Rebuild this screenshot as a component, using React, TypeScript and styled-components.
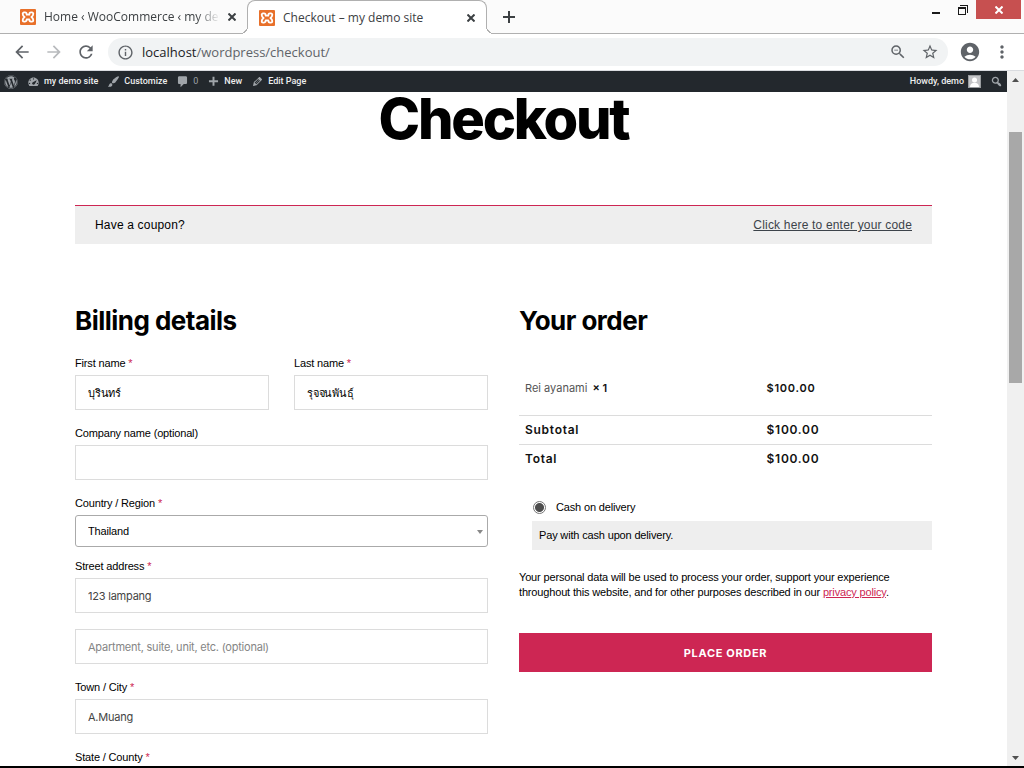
import React from "react";
import styled, { createGlobalStyle } from "styled-components";
import {
  MdAccountCircle,
  MdArrowBack,
  MdArrowForward,
  MdMoreVert,
  MdOutlineInfo,
  MdRefresh,
  MdStarBorder,
  MdZoomOut,
} from "react-icons/md";
import { FaWordpress } from "react-icons/fa";

const uiFont = `"Segoe UI", "Open Sans", "Noto Sans", sans-serif`;
const bodyFont = `Arial, "Liberation Sans", sans-serif`;
const interFont = `Inter, "Liberation Sans", sans-serif`;
const accent = "#cd2653";
const stripColor = "#fbfbfb";
const tabLine = "#b0b0b0";

const GlobalStyle = createGlobalStyle`
  *, *::before, *::after { box-sizing: border-box; }
  body { margin: 0; background: #fff; color: #000; font-family: ${bodyFont}; }
  button, input, select { margin: 0; font: inherit; letter-spacing: inherit; }
  h1, h2, p { margin: 0; }
  svg { display: block; flex: none; }
`;

const Window = styled.div`
  display: flex;
  flex-direction: column;
  height: 100vh;
  overflow: hidden;
  border-bottom: 2px solid #000;
`;

/* Browser chrome */

const TabStrip = styled.div`
  display: flex;
  flex: none;
  height: 34px;
  background: linear-gradient(${tabLine}, ${tabLine}) bottom / 100% 1px no-repeat ${stripColor};
`;

const Tab = styled.div<{ $active?: boolean }>`
  position: relative;
  display: flex;
  align-items: center;
  width: ${(p) => (p.$active ? 240 : 247)}px;
  padding: ${(p) => (p.$active ? "0 11px 0 11px" : "0 11px 0 20px")};
  color: #3c4043;
  font: 12px/16px ${uiFont};
  ${(p) =>
    p.$active &&
    `
    background: #fff;
    border: 1px solid ${tabLine};
    border-bottom: 0;
    border-radius: 8px 8px 0 0;
    &::before, &::after {
      content: "";
      position: absolute;
      bottom: 0;
      width: 8px;
      height: 8px;
    }
    &::before {
      left: -8px;
      background: radial-gradient(circle at 0 0, ${stripColor} 7px, ${tabLine} 7px, ${tabLine} 8px, #fff 8px);
    }
    &::after {
      right: -8px;
      background: radial-gradient(circle at 100% 0, ${stripColor} 7px, ${tabLine} 7px, ${tabLine} 8px, #fff 8px);
    }
  `}
`;

const TabTitle = styled.span<{ $fade?: boolean }>`
  flex: 1;
  min-width: 0;
  margin: 0 8px;
  overflow: hidden;
  white-space: nowrap;
  ${(p) => p.$fade && "mask-image: linear-gradient(to left, transparent, #000 24px);"}
`;

const GlyphButton = styled.button`
  display: flex;
  flex: none;
  align-items: center;
  justify-content: center;
  padding: 0;
  border: 0;
  background: none;
  color: #3c4043;
`;

const NewTabButton = styled(GlyphButton)`
  width: 28px;
  margin-left: 8px;
`;

const WindowControls = styled.div`
  display: flex;
  align-items: flex-start;
  margin-left: auto;
  padding-right: 3px;
`;

const WindowButton = styled(GlyphButton)<{ $close?: boolean }>`
  width: ${(p) => (p.$close ? 45 : 27)}px;
  height: 19px;
  background: ${(p) => (p.$close ? "#c75050" : "none")};
  color: ${(p) => (p.$close ? "#fff" : "#1a1a1a")};
`;

const Toolbar = styled.div`
  display: flex;
  flex: none;
  align-items: center;
  gap: 12px;
  height: 37px;
  padding: 0 12px;
  border-bottom: 1px solid #dadce0;
`;

const ToolButton = styled(GlyphButton)<{ $dim?: boolean }>`
  width: 20px;
  height: 20px;
  color: ${(p) => (p.$dim ? "#b8babd" : "#5f6368")};
`;

const AddressBar = styled.div`
  display: flex;
  flex: 1;
  align-items: center;
  gap: 12px;
  height: 28px;
  padding: 0 8px 0 9px;
  border-radius: 14px;
  background: #f1f3f4;
  color: #5f6368;
`;

const Address = styled.div`
  flex: 1;
  margin-left: -4px;
  font: 13px/20px ${uiFont};
  span { color: #202124; }
`;

/* Page */

const Viewport = styled.div`
  display: flex;
  flex: 1;
  min-height: 0;
`;

const Page = styled.div`
  flex: 1;
  min-width: 0;
  overflow: hidden;
`;

const AdminBar = styled.nav`
  display: flex;
  align-items: center;
  gap: 9px;
  height: 21px;
  padding: 0 4px;
  background: #23282d;
  font: 9px/21px Roboto, ${uiFont};
`;

const AdminLink = styled.a<{ $end?: boolean; $muted?: boolean }>`
  display: flex;
  align-items: center;
  gap: 4px;
  margin-left: ${(p) => (p.$end ? "auto" : 0)};
  color: ${(p) => (p.$muted ? "#9ca1a6" : "#eee")};
  font-weight: ${(p) => (p.$muted ? 400 : 500)};
  text-decoration: none;
  white-space: nowrap;
  svg { color: #a0a5aa; }
`;

const Title = styled.h1`
  padding: 0 0 50px;
  margin-top: -9px;
  font: 800 56px/72px ${interFont};
  letter-spacing: -0.04em;
  text-align: center;
`;

const Content = styled.main`
  padding: 0 75px;
`;

const Coupon = styled.div`
  display: flex;
  justify-content: space-between;
  align-items: center;
  height: 39px;
  padding: 0 20px;
  border-top: 1px solid ${accent};
  background: #eee;
  font-size: 12px;
  line-height: 18px;
  letter-spacing: 0.015em;
  a { color: #3c434a; }
`;

const Columns = styled.div`
  display: grid;
  grid-template-columns: 1fr 1fr;
  gap: 31px;
  margin-top: 61px;
  letter-spacing: -0.01em;
`;

const Heading = styled.h2`
  font: 700 26px/32px ${interFont};
  letter-spacing: -0.02em;
`;

const Form = styled.form`
  display: flex;
  flex-direction: column;
  gap: 16px;
  margin-top: 19px;
`;

const NameRow = styled.div`
  display: grid;
  grid-template-columns: 1fr 1fr;
  gap: 25px;
`;

const Field = styled.div<{ $tight?: boolean }>`
  display: flex;
  flex-direction: column;
  gap: 4px;
  min-width: 0;
  margin-bottom: ${(p) => (p.$tight ? -4 : 0)}px;
`;

const Label = styled.label`
  font-size: 11px;
  line-height: 15px;
  span { color: ${accent}; }
`;

const TextInput = styled.input<{ $dark?: boolean }>`
  width: 100%;
  height: 35px;
  padding: 0 12px;
  border: 1px solid #dcdcdc;
  border-radius: 0;
  outline: 0;
  background: #fff;
  color: ${(p) => (p.$dark ? "#000" : "#444")};
  font: 11px/16px ${interFont};
  letter-spacing: -0.02em;
  &::placeholder { color: #858585; opacity: 1; }
`;

const SelectBox = styled.div`
  position: relative;
  &::after {
    content: "";
    position: absolute;
    top: 15px;
    right: 5px;
    border: solid transparent;
    border-width: 4px 3px 0;
    border-top-color: #888;
  }
`;

const Select = styled.select`
  display: block;
  width: 100%;
  height: 32px;
  padding: 0 12px;
  appearance: none;
  border: 1px solid #aaa;
  border-radius: 3px;
  background: #fff;
  color: #000;
  font-size: 11px;
`;

const OrderTable = styled.table`
  width: 100%;
  margin-top: 24px;
  border-collapse: collapse;
  table-layout: fixed;
  color: #111;
  font: 12px/16px ${interFont};
  letter-spacing: 0.06em;
  th, td { padding: 0 6px; text-align: left; font-weight: 600; }
  th:first-child, td:first-child { width: 58.5%; }
`;

const ItemRow = styled.tr`
  height: 54px;
  font-size: 11px;
`;

const ItemName = styled.span`
  margin-right: 5px;
  color: #555;
  font-weight: 400;
`;

const ItemCell = styled.td`
  letter-spacing: 0;
`;

const TotalRow = styled.tr`
  height: 29px;
  border-top: 1px solid #dcdcdc;
`;

const Payment = styled.div`
  margin: 23px 0 0 13px;
  font-size: 11px;
  line-height: 15px;
`;

const PaymentChoice = styled.label`
  display: flex;
  align-items: center;
  gap: 10px;
  height: 22px;
  padding-left: 1px;
`;

const Radio = styled.input`
  width: 13px;
  height: 13px;
  appearance: none;
  border: 1px solid #767676;
  border-radius: 50%;
  background: radial-gradient(circle, #4d4d4d 4px, #fff 5px);
`;

const PaymentNote = styled.p`
  margin-top: 3px;
  padding: 7px;
  background: #eee;
`;

const Privacy = styled.p`
  margin-top: 20px;
  font-size: 11px;
  line-height: 15px;
  a { color: ${accent}; }
`;

const PlaceOrder = styled.button`
  width: 100%;
  height: 39px;
  margin-top: 33px;
  border: 0;
  background: ${accent};
  color: #fff;
  font: 700 11px/16px ${interFont};
  letter-spacing: 0.06em;
  text-transform: uppercase;
`;

const ScrollBar = styled.div`
  display: flex;
  flex-direction: column;
  width: 17px;
  background: #f0f0f0;
`;

const ScrollArrow = styled(GlyphButton)`
  height: 17px;
  color: #505050;
`;

const ScrollTrack = styled.div`
  flex: 1;
  padding: 44px 2px 0;
`;

const ScrollThumb = styled.div`
  height: 251px;
  background: #a8a8a8;
`;

/* Icons */

const adminIcons = {
  dashboard:
    "M3.76 17h12.48C17.34 15.63 18 13.9 18 12c0-4.41-3.58-8-8-8s-8 3.59-8 8c0 1.9.66 3.63 1.76 5zM9 6c0-.55.45-1 1-1s1 .45 1 1-.45 1-1 1-1-.45-1-1zM4 8c0-.55.45-1 1-1s1 .45 1 1-.45 1-1 1-1-.45-1-1zm4.52 3.4c.84-.83 6.51-3.5 6.51-3.5s-2.66 5.68-3.49 6.51c-.84.84-2.18.84-3.02 0-.83-.83-.83-2.18 0-3.01zM3 13c0-.55.45-1 1-1s1 .45 1 1-.45 1-1 1-1-.45-1-1zm12 0c0-.55.45-1 1-1s1 .45 1 1-.45 1-1 1-1-.45-1-1z",
  brush:
    "M18.33 3.57s.27-.8-.31-1.36c-.53-.52-1.22-.24-1.22-.24-.61.3-5.76 3.47-7.67 5.57-.86.96-2.06 3.79-1.09 4.82.92.98 3.96-.17 4.79-1 2.06-2.06 5.21-7.17 5.5-7.79zM1.4 17.65c2.37-1.56 1.46-3.41 3.23-4.64.93-.65 2.22-.62 3.08.29.63.67.8 2.57-.16 3.46-1.57 1.45-4 1.55-6.15.89z",
  comment: "M5 2h10c1.1 0 2 .9 2 2v8c0 1.1-.9 2-2 2h-3l-5 5v-5H5c-1.1 0-2-.9-2-2V4c0-1.1.9-2 2-2z",
  plus: "M17 8v3h-5.500v5.500h-3V11H3V8h5.500V2.500h3V8z",
  pencil:
    "M13.89 3.39l2.71 2.72c.46.46.42 1.24.03 1.64l-8.01 8.02-5.56 1.16 1.16-5.58s7.6-7.63 7.99-8.03c.39-.39 1.22-.39 1.68.07zm-2.73 2.79l-5.59 5.61 1.11 1.11 5.54-5.65zm-2.97 8.23l5.58-5.6-1.07-1.08-5.59 5.6z",
  search:
    "M12.14 4.18c1.87 1.87 2.11 4.75.72 6.89.12.1.22.21.36.31.2.16.47.36.81.59.34.24.56.39.66.47.42.31.73.57.94.78.32.32.6.65.84 1 .25.35.44.69.59 1.04.14.35.21.68.18 1-.02.32-.14.59-.36.81s-.49.34-.81.36c-.31.02-.65-.04-.99-.19-.35-.14-.7-.34-1.04-.59-.35-.24-.68-.52-1-.84-.21-.21-.47-.52-.77-.93-.1-.13-.25-.35-.47-.66-.22-.32-.4-.57-.56-.78-.16-.2-.29-.35-.44-.5-2.07 1.09-4.69.76-6.44-.98-2.14-2.15-2.14-5.64 0-7.78 2.15-2.15 5.63-2.15 7.78 0zm-1.41 6.36c1.36-1.37 1.36-3.58 0-4.95-1.37-1.37-3.59-1.37-4.95 0-1.37 1.37-1.37 3.58 0 4.95 1.36 1.37 3.58 1.37 4.95 0z",
};

const AdminIcon = ({ name }: { name: keyof typeof adminIcons }) => (
  <svg width="13" height="13" viewBox="0 0 20 20" fill="currentColor" fillRule="evenodd" aria-hidden="true">
    <path d={adminIcons[name]} />
  </svg>
);

const XamppLogo = () => (
  <svg width="16" height="16" viewBox="0 0 16 16" aria-hidden="true">
    <rect width="16" height="16" rx="1" fill="#e8702a" />
    <path
      d="M5 3.400H4a1.300 1.300 0 0 0-1.300 1.300c0 1.400.7 2.500 1.900 3.300-1.200.8-1.900 1.900-1.900 3.300A1.300 1.300 0 0 0 4 12.600h1c1.500 0 1.700-1.100 1.700-2.300h2.600c0 1.200.2 2.300 1.700 2.300h1a1.300 1.300 0 0 0 1.300-1.300c0-1.400-.7-2.500-1.900-3.300 1.200-.8 1.900-1.900 1.900-3.300A1.300 1.300 0 0 0 12 3.400h-1c-1.500 0-1.700 1.100-1.700 2.300H6.700c0-1.200-.2-2.300-1.700-2.300z"
      fill="none"
      stroke="#fff"
      strokeWidth="1.800"
      strokeLinejoin="round"
    />
  </svg>
);

const CrossIcon = () => (
  <svg width="8" height="8" viewBox="0 0 8 8" stroke="currentColor" strokeWidth="2" aria-hidden="true">
    <path d="M.5.5l7 7M7.500.5l-7 7" />
  </svg>
);

const Avatar = () => (
  <svg width="13" height="13" viewBox="0 0 13 13" aria-hidden="true">
    <rect x=".5" y=".5" width="12" height="12" fill="#c3c4c7" stroke="#9a9da0" />
    <circle cx="6.500" cy="5" r="2.500" fill="#fff" />
    <path d="M2 12c0-3 2-4.200 4.500-4.200S11 9 11 12z" fill="#fff" />
  </svg>
);

const TextField = ({
  id,
  label,
  required,
  dark,
  ...rest
}: { id: string; label?: string; required?: boolean; dark?: boolean } & React.InputHTMLAttributes<HTMLInputElement>) => (
  <Field>
    {label && (
      <Label htmlFor={id}>
        {label} {required && <span>*</span>}
      </Label>
    )}
    <TextInput id={id} type="text" $dark={dark} {...rest} />
  </Field>
);

export default function App() {
  return (
    <Window>
      <GlobalStyle />
      <TabStrip>
        <Tab>
          <XamppLogo />
          <TabTitle $fade>Home ‹ WooCommerce ‹ my demo site</TabTitle>
          <GlyphButton aria-label="Close Home tab">
            <CrossIcon />
          </GlyphButton>
        </Tab>
        <Tab $active>
          <XamppLogo />
          <TabTitle>Checkout – my demo site</TabTitle>
          <GlyphButton aria-label="Close Checkout tab">
            <CrossIcon />
          </GlyphButton>
        </Tab>
        <NewTabButton aria-label="New tab">
          <svg width="12" height="12" viewBox="0 0 12 12" stroke="currentColor" strokeWidth="2" aria-hidden="true">
            <path d="M6 0v12M0 6h12" />
          </svg>
        </NewTabButton>
        <WindowControls>
          <WindowButton aria-label="Minimize">
            <svg width="8" height="10" viewBox="0 0 8 10" fill="currentColor" aria-hidden="true">
              <path d="M0 7h8v2H0z" />
            </svg>
          </WindowButton>
          <WindowButton aria-label="Restore">
            <svg width="10" height="10" viewBox="0 0 10 10" fill="currentColor" fillRule="evenodd" aria-hidden="true">
              <path d="M2 0h8v8H9V1H2zM0 2h8v8H0zm1 2v5h6V4z" />
            </svg>
          </WindowButton>
          <WindowButton $close aria-label="Close window">
            <CrossIcon />
          </WindowButton>
        </WindowControls>
      </TabStrip>

      <Toolbar>
        <ToolButton aria-label="Back">
          <MdArrowBack size={20} />
        </ToolButton>
        <ToolButton $dim aria-label="Forward">
          <MdArrowForward size={20} />
        </ToolButton>
        <ToolButton aria-label="Reload">
          <MdRefresh size={20} />
        </ToolButton>
        <AddressBar>
          <MdOutlineInfo size={17} />
          <Address>
            <span>localhost</span>/wordpress/checkout/
          </Address>
          <ToolButton aria-label="Zoom">
            <MdZoomOut size={18} />
          </ToolButton>
          <ToolButton aria-label="Bookmark this page">
            <MdStarBorder size={18} />
          </ToolButton>
        </AddressBar>
        <ToolButton aria-label="Profile">
          <MdAccountCircle size={22} />
        </ToolButton>
        <ToolButton aria-label="Menu">
          <MdMoreVert size={20} />
        </ToolButton>
      </Toolbar>

      <Viewport>
        <Page>
          <AdminBar>
            <AdminLink href="#" aria-label="WordPress">
              <FaWordpress size={14} />
            </AdminLink>
            <AdminLink href="#">
              <AdminIcon name="dashboard" />
              my demo site
            </AdminLink>
            <AdminLink href="#">
              <AdminIcon name="brush" />
              Customize
            </AdminLink>
            <AdminLink href="#" $muted>
              <AdminIcon name="comment" />0
            </AdminLink>
            <AdminLink href="#">
              <AdminIcon name="plus" />
              New
            </AdminLink>
            <AdminLink href="#">
              <AdminIcon name="pencil" />
              Edit Page
            </AdminLink>
            <AdminLink href="#" $end>
              Howdy, demo
              <Avatar />
            </AdminLink>
            <AdminLink href="#" aria-label="Search">
              <AdminIcon name="search" />
            </AdminLink>
          </AdminBar>

          <Content>
            <Title>Checkout</Title>
            <Coupon>
              Have a coupon?
              <a href="#">Click here to enter your code</a>
            </Coupon>
            <Columns>
              <section>
                <Heading>Billing details</Heading>
                <Form>
                  <NameRow>
                    <TextField id="first-name" label="First name" required dark defaultValue="บุรินทร์" />
                    <TextField id="last-name" label="Last name" required dark defaultValue="รุจจนพันธุ์" />
                  </NameRow>
                  <TextField id="company" label="Company name (optional)" />
                  <Field $tight>
                    <Label htmlFor="country">
                      Country / Region <span>*</span>
                    </Label>
                    <SelectBox>
                      <Select id="country" defaultValue="TH">
                        <option value="TH">Thailand</option>
                      </Select>
                    </SelectBox>
                  </Field>
                  <TextField id="street" label="Street address" required defaultValue="123 lampang" />
                  <TextField
                    id="apartment"
                    aria-label="Apartment"
                    placeholder="Apartment, suite, unit, etc. (optional)"
                  />
                  <TextField id="city" label="Town / City" required defaultValue="A.Muang" />
                  <TextField id="state" label="State / County" required />
                </Form>
              </section>

              <section>
                <Heading>Your order</Heading>
                <OrderTable>
                  <tbody>
                    <ItemRow>
                      <ItemCell>
                        <ItemName>Rei ayanami</ItemName>× 1
                      </ItemCell>
                      <td>$100.00</td>
                    </ItemRow>
                    <TotalRow>
                      <th scope="row">Subtotal</th>
                      <td>$100.00</td>
                    </TotalRow>
                    <TotalRow>
                      <th scope="row">Total</th>
                      <td>$100.00</td>
                    </TotalRow>
                  </tbody>
                </OrderTable>
                <Payment>
                  <PaymentChoice>
                    <Radio type="radio" name="payment" defaultChecked />
                    Cash on delivery
                  </PaymentChoice>
                  <PaymentNote>Pay with cash upon delivery.</PaymentNote>
                </Payment>
                <Privacy>
                  Your personal data will be used to process your order, support your experience throughout this
                  website, and for other purposes described in our <a href="#">privacy policy</a>.
                </Privacy>
                <PlaceOrder type="button">Place order</PlaceOrder>
              </section>
            </Columns>
          </Content>
        </Page>
        <ScrollBar>
          <ScrollArrow aria-label="Scroll up">
            <svg width="7" height="4" viewBox="0 0 7 4" fill="currentColor" aria-hidden="true">
              <path d="M0 4L3.500 0 7 4z" />
            </svg>
          </ScrollArrow>
          <ScrollTrack>
            <ScrollThumb />
          </ScrollTrack>
          <ScrollArrow aria-label="Scroll down">
            <svg width="7" height="4" viewBox="0 0 7 4" fill="currentColor" aria-hidden="true">
              <path d="M0 0l3.500 4L7 0z" />
            </svg>
          </ScrollArrow>
        </ScrollBar>
      </Viewport>
    </Window>
  );
}
